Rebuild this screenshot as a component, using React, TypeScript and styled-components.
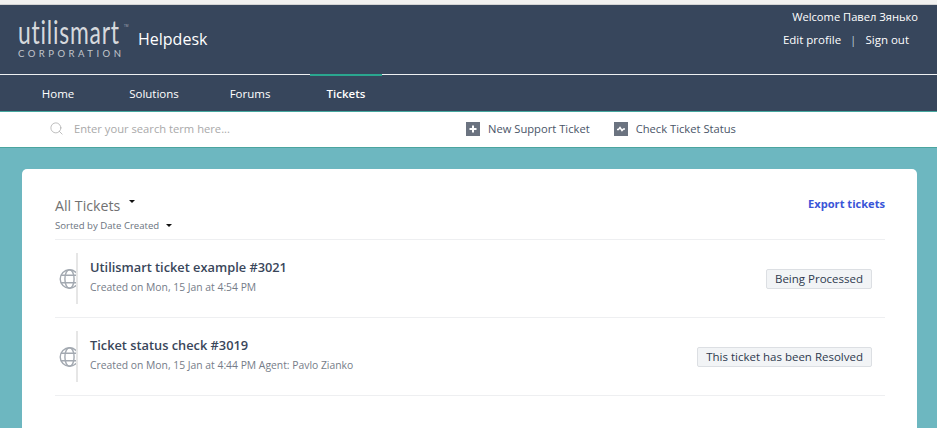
import React from 'react';
import styled, { createGlobalStyle } from 'styled-components';
import { Search } from 'lucide-react';

const GlobalStyle = createGlobalStyle`
  html, body {
    margin: 0;
    padding: 0;
    height: 428px;
    overflow: hidden;
    background: #6db7c0;
    font-family: "Open Sans", "Liberation Sans", sans-serif;
  }
`;

const Page = styled.div`
  width: 937px;
  height: 428px;
  overflow: hidden;
  display: flex;
  flex-direction: column;
`;

const BrowserEdge = styled.div`
  height: 4px;
  background: #f1f1f0;
  border-bottom: 1px solid #d4d4d4;
`;

const Header = styled.header`
  height: 69px;
  background: #37465c;
  display: flex;
  justify-content: space-between;
  color: #fff;
`;

const Brand = styled.div`
  display: flex;
  align-items: flex-start;
  padding: 13px 0 0 18px;
`;

const Logo = styled.div`
  position: relative;
  width: 105px;
  display: flex;
  flex-direction: column;
  color: #dfe1e4;
`;

const LogoWord = styled.div`
  font-family: "Lato", sans-serif;
  font-weight: 400;
  font-size: 32px;
  line-height: 28px;
  height: 30px;
  letter-spacing: 1.1px;
  white-space: nowrap;
  color: #d6d9dd;
  transform: scaleX(0.715);
  transform-origin: left center;
`;

const LogoTm = styled.span`
  position: absolute;
  left: 106px;
  top: 6px;
  font-size: 3px;
  line-height: 4px;
  color: #aeb4bd;
`;

const LogoSub = styled.div`
  font-family: "Lato", sans-serif;
  font-weight: 400;
  font-size: 9.5px;
  line-height: 12px;
  letter-spacing: 3.5px;
  white-space: nowrap;
  color: #c3c7cd;
`;

const BrandTitle = styled.div`
  margin: 10px 0 0 15px;
  font-size: 16px;
  line-height: 22px;
`;

const UserBox = styled.div`
  display: flex;
  flex-direction: column;
  align-items: flex-end;
  font-size: 11.5px;
  padding: 4px 19px 0 0;
`;

const Welcome = styled.div`
  font-size: 11.15px;
  line-height: 16px;
`;

const UserLinks = styled.div`
  display: flex;
  margin: 7px 9px 0 0;
  line-height: 16px;
`;

const Divider = styled.span`
  margin: 0 9px;
  color: #b9c6d6;
`;

const Nav = styled.nav`
  height: 36px;
  background: #37465c;
  border-top: 1px solid #eef0f2;
  border-bottom: 1px solid #45a79f;
  display: flex;
  gap: 24px;
  padding-left: 22px;
`;

const NavItem = styled.a<{ $active?: boolean }>`
  position: relative;
  width: 72px;
  display: flex;
  justify-content: center;
  align-items: center;
  color: #fff;
  font-size: 11.5px;
  font-weight: ${p => (p.$active ? 600 : 400)};
  ${p =>
    p.$active
      ? `&::before {
          content: '';
          position: absolute;
          left: 0;
          right: 0;
          top: -1px;
          height: 2px;
          background: #2aa68f;
        }`
      : ''}
`;

const SubBar = styled.div`
  box-sizing: border-box;
  height: 36px;
  background: #fff;
  border-bottom: 1px solid #4ba59f;
  display: flex;
  align-items: center;
  padding: 0 0 2px 49px;
`;

const SearchBox = styled.div`
  width: 417px;
  display: flex;
  align-items: center;
  gap: 10px;
  color: #a9a9a9;
  font-size: 11.2px;
`;

const SubAction = styled.a`
  display: flex;
  align-items: center;
  gap: 8px;
  margin-right: 24px;
  color: #4a5568;
  font-size: 11.2px;
`;

const ActionIcon = styled.span`
  width: 14px;
  height: 14px;
  background: #6b7380;
  display: flex;
  align-items: center;
  justify-content: center;
`;

const Body = styled.main`
  flex: 1;
  min-height: 0;
  padding: 21px 20px 0 22px;
`;

const Card = styled.section`
  height: 300px;
  background: #fff;
  border-radius: 5px 5px 0 0;
  padding: 26px 32px 0 33px;
`;

const CardHead = styled.div`
  display: flex;
  justify-content: space-between;
  align-items: flex-start;
  height: 44px;
  border-bottom: 1px solid #eeeff1;
`;

const TitleLine = styled.div`
  display: flex;
  align-items: flex-start;
  margin-top: 1px;
  color: #717171;
  font-size: 14.2px;
  line-height: 20px;
`;

const SortLine = styled.div`
  display: flex;
  align-items: center;
  margin-top: 3px;
  color: #6c7480;
  font-size: 9.6px;
  line-height: 13px;
`;

const Caret = styled.span<{ $ml: number; $mt: number }>`
  width: 0;
  height: 0;
  margin: ${p => p.$mt}px 0 0 ${p => p.$ml}px;
  border-left: 3.5px solid transparent;
  border-right: 3.5px solid transparent;
  border-top: 3.5px solid #111;
`;

const ExportLink = styled.a`
  margin-top: 1px;
  color: #3a55d8;
  font-size: 11.1px;
  font-weight: 700;
  line-height: 16px;
`;

const Row = styled.article`
  height: 77px;
  border-bottom: 1px solid #eeeff1;
  display: flex;
  align-items: center;
  padding-right: 13px;
`;

const GlobeSlot = styled.div`
  width: 21px;
  height: 51px;
  overflow: hidden;
  display: flex;
  align-items: center;
  justify-content: flex-end;
  border-right: 2px solid #e6e6e6;
`;

const TicketText = styled.div`
  flex: 1;
  margin: -6px 0 0 12px;
`;

const TicketTitle = styled.div`
  color: #39465a;
  font-size: 12.8px;
  font-weight: 600;
  line-height: 18px;
`;

const TicketMeta = styled.div`
  margin-top: 4px;
  color: #757c88;
  font-size: 10.35px;
  line-height: 14px;
`;

const Status = styled.span`
  box-sizing: border-box;
  height: 20px;
  padding: 0 8px;
  background: #f2f4f6;
  border: 1px solid #dcdfe3;
  border-radius: 2px;
  color: #2e3a4e;
  font-size: 11.5px;
  line-height: 18px;
`;

const Globe = () => (
  <svg width="20" height="22" viewBox="0 0 20 22" fill="none" stroke="#a3a9b1" strokeWidth="1.4" style={{ flex: 'none', marginRight: -3 }}>
    <circle cx="10.5" cy="11" r="9.3" />
    <ellipse cx="10.5" cy="11" rx="4.6" ry="9.3" />
    <path d="M2 7.2h17M2 14.8h17" />
  </svg>
);

const tickets = [
  { title: 'Utilismart ticket example #3021', meta: 'Created on Mon, 15 Jan at 4:54 PM', status: 'Being Processed' },
  { title: 'Ticket status check #3019', meta: 'Created on Mon, 15 Jan at 4:44 PM Agent: Pavlo Zianko', status: 'This ticket has been Resolved' },
];

export default function App() {
  return (
    <Page>
      <GlobalStyle />
      <BrowserEdge />
      <Header>
        <Brand>
          <Logo>
            <LogoWord>utilismart</LogoWord>
            <LogoTm>TM</LogoTm>
            <LogoSub>CORPORATION</LogoSub>
          </Logo>
          <BrandTitle>Helpdesk</BrandTitle>
        </Brand>
        <UserBox>
          <Welcome>Welcome Павел Зянько</Welcome>
          <UserLinks>
            <span>Edit profile</span>
            <Divider>|</Divider>
            <span>Sign out</span>
          </UserLinks>
        </UserBox>
      </Header>
      <Nav>
        <NavItem>Home</NavItem>
        <NavItem>Solutions</NavItem>
        <NavItem>Forums</NavItem>
        <NavItem $active>Tickets</NavItem>
      </Nav>
      <SubBar>
        <SearchBox>
          <Search size={15} strokeWidth={1.2} color="#a9a9a9" />
          <span>Enter your search term here...</span>
        </SearchBox>
        <SubAction>
          <ActionIcon>
            <svg width="10" height="10" viewBox="0 0 10 10"><path d="M5 1.5v7M1.5 5h7" stroke="#fff" strokeWidth="2" /></svg>
          </ActionIcon>
          New Support Ticket
        </SubAction>
        <SubAction>
          <ActionIcon>
            <svg width="12" height="10" viewBox="0 0 12 10" fill="none"><path d="M2 5.5h1.5L5 3.5l2 3 1.5-1.5H10" stroke="#fff" strokeWidth="1.5" /></svg>
          </ActionIcon>
          Check Ticket Status
        </SubAction>
      </SubBar>
      <Body>
        <Card>
          <CardHead>
            <div>
              <TitleLine>
                All Tickets
                <Caret $ml={9} $mt={4} />
              </TitleLine>
              <SortLine>
                Sorted by Date Created
                <Caret $ml={7} $mt={0} />
              </SortLine>
            </div>
            <ExportLink>Export tickets</ExportLink>
          </CardHead>
          {tickets.map(t => (
            <Row key={t.title}>
              <GlobeSlot>
                <Globe />
              </GlobeSlot>
              <TicketText>
                <TicketTitle>{t.title}</TicketTitle>
                <TicketMeta>{t.meta}</TicketMeta>
              </TicketText>
              <Status>{t.status}</Status>
            </Row>
          ))}
        </Card>
      </Body>
    </Page>
  );
}
